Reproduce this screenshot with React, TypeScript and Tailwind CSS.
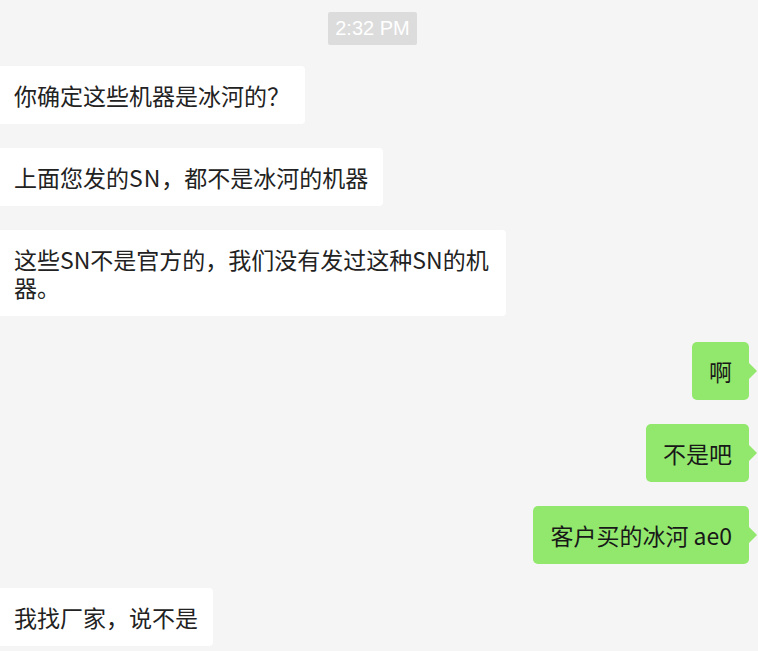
import React from "react";

const font = { fontFamily: '"Noto Sans CJK SC", "Noto Sans", sans-serif' };

function Left({ children, className = "" }: { children: React.ReactNode; className?: string }) {
  return (
    <div className="flex justify-start">
      <div
        className={`bg-white rounded-r-[4px] pl-[14px] pr-[15px] py-[15px] text-[23px] leading-[28px] text-[#222222] ${className}`}
      >
        {children}
      </div>
    </div>
  );
}

function Right({ children }: { children: React.ReactNode }) {
  return (
    <div className="flex justify-end pr-[9px]">
      <div className="relative bg-[#92e86d] rounded-[5px] px-[17px] py-[15px] text-[23px] leading-[28px] text-[#181818]">
        {children}
        <span className="absolute right-[-8px] top-1/2 -translate-y-1/2 w-0 h-0 border-y-[8px] border-y-transparent border-l-[8px] border-l-[#92e86d]" />
      </div>
    </div>
  );
}

export default function App() {
  return (
    <div className="w-[758px] h-[651px] overflow-hidden bg-[#f5f5f5] pt-[12px]" style={font}>
      <div className="flex">
        <div
          className="ml-[328px] w-[89px] h-[33px] bg-[#dcdcdc] text-white text-[20px] leading-[33px] text-center rounded-[2px]"
          style={{ fontFamily: '"Liberation Sans", Arial, sans-serif' }}
        >
          2:32 PM
        </div>
      </div>
      <div className="flex flex-col gap-[24px] mt-[21px]">
        <Left>你确定这些机器是冰河的？</Left>
        <Left>
          上面您发的<span className="tracking-[1px]">SN</span>，都不是冰河的机器
        </Left>
        <Left className="max-w-[506px]">这些SN不是官方的，我们没有发过这种SN的机器。</Left>
        <div className="flex flex-col gap-[24px] mt-[2px]">
          <Right>啊</Right>
          <Right>不是吧</Right>
          <Right>客户买的冰河 ae0</Right>
        </div>
        <Left>我找厂家，说不是</Left>
      </div>
    </div>
  );
}
